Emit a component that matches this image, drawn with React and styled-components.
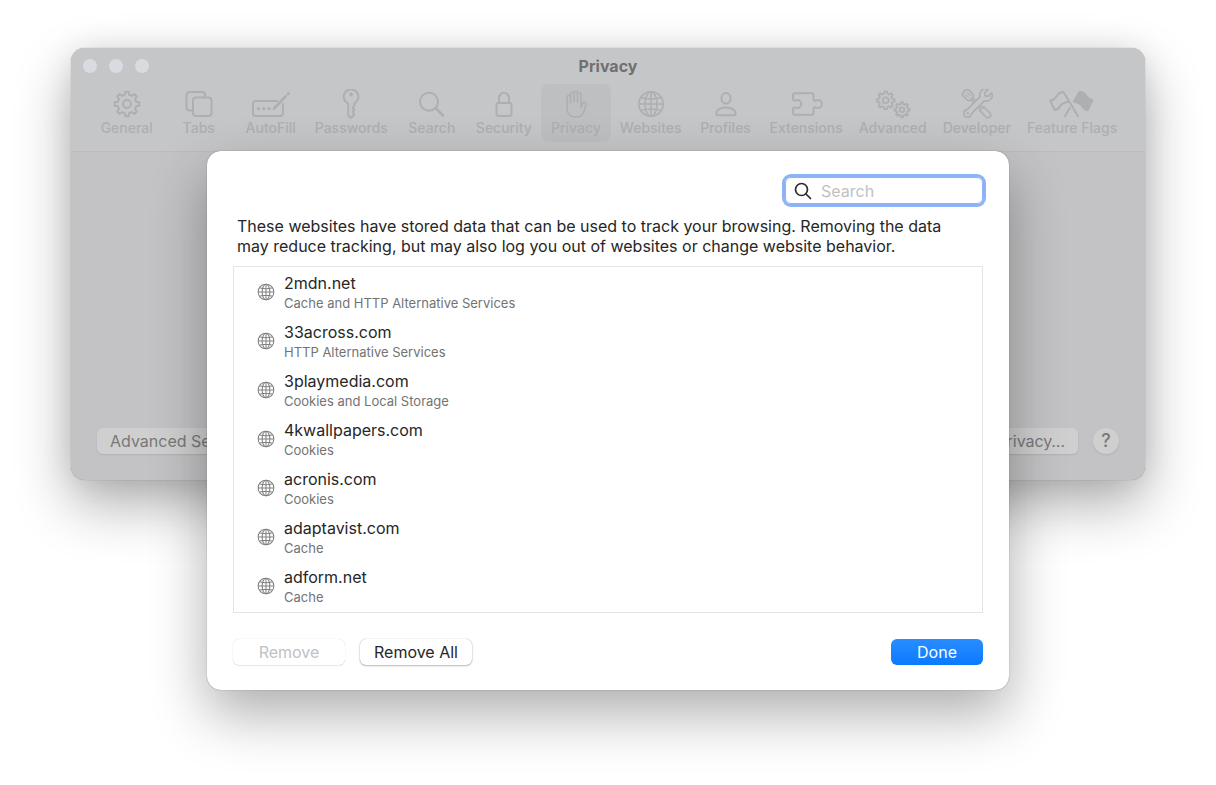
import React from 'react';
import styled, { createGlobalStyle } from 'styled-components';

const tabs = [
    { name: 'General', icon: GearIcon },
    { name: 'Tabs', icon: TabsIcon },
    { name: 'AutoFill', icon: AutoFillIcon },
    { name: 'Passwords', icon: KeyIcon },
    { name: 'Search', icon: SearchIcon },
    { name: 'Security', icon: LockIcon },
    { name: 'Privacy', icon: HandIcon },
    { name: 'Websites', icon: GlobeIcon },
    { name: 'Profiles', icon: ProfileIcon },
    { name: 'Extensions', icon: PuzzleIcon },
    { name: 'Advanced', icon: GearsIcon },
    { name: 'Developer', icon: ToolsIcon },
    { name: 'Feature Flags', icon: FlagsIcon },
];

const websites = [
    { domain: '2mdn.net', data: 'Cache and HTTP Alternative Services' },
    { domain: '33across.com', data: 'HTTP Alternative Services' },
    { domain: '3playmedia.com', data: 'Cookies and Local Storage' },
    { domain: '4kwallpapers.com', data: 'Cookies' },
    { domain: 'acronis.com', data: 'Cookies' },
    { domain: 'adaptavist.com', data: 'Cache' },
    { domain: 'adform.net', data: 'Cache' },
];

export default function App() {
    const [search, setSearch] = React.useState('');
    const [activeTab, setActiveTab] = React.useState('Privacy');

    const shown = websites.filter((site) => site.domain.includes(search.toLowerCase()));

    return (
        <>
        <GlobalStyle />
        <Page>
            <Window>
                <Header>
                    <TitleBar>
                        <Lights>
                            <Light type="button" aria-label="Close" />
                            <Light type="button" aria-label="Minimize" />
                            <Light type="button" aria-label="Zoom" />
                        </Lights>
                        <Title>{activeTab}</Title>
                    </TitleBar>
                    <Toolbar>
                        {tabs.map((tab) => (
                            <ToolbarItem
                                type="button"
                                key={tab.name}
                                $active={tab.name === activeTab}
                                onClick={() => setActiveTab(tab.name)}
                            >
                                <ToolbarIcon viewBox="-24 -15 48 30" aria-hidden="true">
                                    <tab.icon />
                                </ToolbarIcon>
                                {tab.name}
                            </ToolbarItem>
                        ))}
                    </Toolbar>
                </Header>
                <Body>
                    <BottomBar>
                        <DimButton type="button">Advanced Settings…</DimButton>
                        <BottomGroup>
                            <DimButton type="button">About Safari &amp; Privacy…</DimButton>
                            <HelpButton type="button" aria-label="Help">?</HelpButton>
                        </BottomGroup>
                    </BottomBar>
                    <Sheet role="dialog" aria-label="Website data">
                        <SearchField>
                            <SearchGlyph viewBox="0 0 18 18" aria-hidden="true">
                                <circle cx="7.5" cy="7.5" r="6" />
                                <path d="M12 12l4.500 4.500" />
                            </SearchGlyph>
                            <SearchInput
                                type="text"
                                placeholder="Search"
                                aria-label="Search"
                                value={search}
                                onChange={(e) => setSearch(e.target.value)}
                            />
                        </SearchField>
                        <Message>
                            These websites have stored data that can be used to track your browsing. Removing the data
                            may reduce tracking, but may also log you out of websites or change website behavior.
                        </Message>
                        <SiteList>
                            {shown.map((site) => (
                                <SiteRow key={site.domain}>
                                    <SiteIcon viewBox="-14 -14 28 28" aria-hidden="true">
                                        <GlobeIcon />
                                    </SiteIcon>
                                    <div>
                                        <Domain>{site.domain}</Domain>
                                        <DataKind>{site.data}</DataKind>
                                    </div>
                                </SiteRow>
                            ))}
                        </SiteList>
                        <Actions>
                            <SheetButton type="button" disabled>Remove</SheetButton>
                            <SheetButton type="button">Remove All</SheetButton>
                            <DoneButton type="button">Done</DoneButton>
                        </Actions>
                    </Sheet>
                </Body>
            </Window>
        </Page>
        </>
    )
}

// icons are drawn round 0,0

function gearPath(cx, cy, outer, inner, teeth) {
    const step = (Math.PI * 2) / teeth;
    const points = [];
    for (let i = 0; i < teeth; i++) {
        const a = i * step - Math.PI / 2;
        [[-0.31, inner], [-0.17, outer], [0.17, outer], [0.31, inner]].forEach(([offset, r]) => {
            const angle = a + offset * step;
            points.push(`${(cx + r * Math.cos(angle)).toFixed(2)} ${(cy + r * Math.sin(angle)).toFixed(2)}`);
        });
    }
    return `M${points.join('L')}Z`;
}

function GearIcon() {
    return (
        <>
            <path d={gearPath(0, 0, 12.4, 9.4, 8)} />
            <circle r="4" />
        </>
    )
}

function TabsIcon() {
    return (
        <>
            <path d="M-7 6.5H-9.5a3 3 0 0 1-3-3V-9a3 3 0 0 1 3-3H3a3 3 0 0 1 3 3v2" />
            <rect x="-6" y="-6.5" width="18.5" height="18.5" rx="3" />
        </>
    )
}

function AutoFillIcon() {
    return (
        <>
            <path d="M6-3H-15.5a2.500 2.500 0 0 0-2.500 2.500v10a2.500 2.500 0 0 0 2.500 2.500H9.500a2.500 2.500 0 0 0 2.500-2.500V0" />
            <path d="M3 4.500L14.500-7.500" strokeWidth="2.600" />
            <path d="M17-10L17.500-10.500" strokeWidth="2.600" />
            <g fill="currentColor" stroke="none">
                <circle cx="-12.500" cy="4.700" r="1.600" />
                <circle cx="-7.300" cy="4.700" r="1.600" />
                <circle cx="-2" cy="4.700" r="1.600" />
            </g>
        </>
    )
}

function KeyIcon() {
    return (
        <>
            <path d="M-2.800-.6A7.300 7.300 0 1 1 3.300-.8L3.300 2 1.500 4 3.300 6 1.500 8 3.300 10.500 0 14-2.800 11.500Z" />
            <circle cy="-9.500" r="1.900" fill="currentColor" stroke="none" />
        </>
    )
}

function SearchIcon() {
    return (
        <>
            <circle cx="-3" cy="-2.300" r="9" />
            <path d="M4 4.500L11 11.500" strokeWidth="2.500" />
        </>
    )
}

function LockIcon() {
    return (
        <>
            <rect x="-7.500" y="-1" width="15" height="13" rx="2" />
            <path d="M-5-1V-6a5 5.300 0 0 1 10 0V-1" />
        </>
    )
}

function HandIcon() {
    return (
        <path
            strokeWidth="1.600"
            d="M-9 4V-7a1.750 1.750 0 0 1 3.500 0V-1V-10a1.750 1.750 0 0 1 3.500 0V-2V-11a1.750 1.750 0 0 1 3.500 0V-2V-9.500a1.750 1.750 0 0 1 3.500 0V3.500L7-1a1.600 1.600 0 0 1 3 1C9 4 8.500 13 0 13C-6 13-9 9-9 4Z"
        />
    )
}

function GlobeIcon() {
    return (
        <g strokeWidth="1.600">
            <circle r="12.200" />
            <ellipse rx="6" ry="12.200" />
            <path d="M0-12.200V12.200M-12.200 0H12.200M-10.200-6.500Q0-3.500 10.200-6.500M-10.200 6.500Q0 3.500 10.200 6.500" />
        </g>
    )
}

function ProfileIcon() {
    return (
        <>
            <ellipse cy="-5.700" rx="4.600" ry="5.200" />
            <path d="M-9.600 10C-9.600 6-5.500 3.400 0 3.400S9.600 6 9.600 10q0 1.300-1.300 1.300H-8.300q-1.300 0-1.300-1.300Z" />
        </>
    )
}

function PuzzleIcon() {
    return (
        <path d="M-13-5V-8.800a2 2 0 0 1 2-2H5.500a2 2 0 0 1 2 2V-4.500C7.700-2.700 9.300-3 10.500-3.600A3.900 3.900 0 1 1 10.500 3.600C9.300 3 7.700 2.700 7.500 4.500V8.800a2 2 0 0 1-2 2H-11a2 2 0 0 1-2-2V5C-12.800 3.400-11.200 3.200-10 3.600A3.900 3.900 0 1 0-10-3.600C-11.200-3.200-12.800-3.400-13-5Z" />
    )
}

function GearsIcon() {
    return (
        <g strokeWidth="1.800">
            <path d={gearPath(-7.3, -3.7, 9, 6.800, 8)} />
            <circle cx="-7.300" cy="-3.700" r="3" />
            <path d={gearPath(9, 5.700, 7.600, 5.700, 8)} />
            <circle cx="9" cy="5.700" r="2.300" />
        </g>
    )
}

function ToolsIcon() {
    return (
        <g strokeWidth="1.700">
            <g transform="rotate(-45)">
                <path d="M-1.300-7.500V7H-2.800V15.500a2.800 2.800 0 0 0 5.600 0V7H1.300V-7.500" />
                <rect x="-4" y="-18" width="8" height="10.500" rx="2.500" />
                <path d="M-1.300-15V-10.500M1.300-15V-10.500" strokeWidth="1" />
            </g>
            <g transform="rotate(45)">
                <path
                    fill="#c5c6c8"
                    d="M-2.500-18.300V-13.300L0-11.500 2.500-13.300V-18.300C7-16.500 8-10.500 3-7.300V11A3.800 3.800 0 1 1-3 11V-7.300C-8-10.500-7-16.500-2.500-18.300Z"
                />
                <circle cy="13" r="1.200" fill="currentColor" stroke="none" />
            </g>
        </g>
    )
}

function FlagsIcon() {
    return (
        <>
            <path d="M-8.500-12L6 12.300M-8.500-12C-12-12-14-10-15.500-7.500S-19-4-21.800-3.300L-17.300 6C-14 5.500-12.500 3.500-11.500 1.500S-7-1.500-3.500-2.500" />
            <path fill="currentColor" d="M7.500-12C10.500-12 12.500-11 14-8.500S17.500-4.500 20.500-4L15.800 6C13 6 11.500 4.500 10 2S6-1.500 2-2.500Z" />
            <path d="M-2.300 4L-7 12.300" />
        </>
    )
}

const font = `'Inter', 'Roboto', 'Liberation Sans', sans-serif`;

const GlobalStyle = createGlobalStyle`
    *{
        box-sizing: border-box;
    }
    body{
        margin: 0;
        background: #ffffff;
        font-family: ${font};
    }
    button, input{
        font-family: inherit;
        margin: 0;
    }
`

const Page = styled.main`
    min-height: 100vh;
    padding: 48px 71px;
`

const Window = styled.section`
    border-radius: 14px;
    background: #c3c3c5;
    box-shadow: 0 0 1px rgba(0, 0, 0, 0.4), 0 0 30px rgba(0, 0, 0, 0.08), 0 24px 56px rgba(0, 0, 0, 0.32);
`

const Header = styled.header`
    padding-bottom: 9px;
    border-bottom: 1px solid #bbbcbe;
    border-radius: 14px 14px 0 0;
    background: #c5c6c8;
`

const TitleBar = styled.div`
    display: grid;
    grid-template-columns: 1fr auto 1fr;
    align-items: center;
    height: 36px;
    padding: 0 12px;
`

const Lights = styled.div`
    display: flex;
    gap: 12px;
`

const Light = styled.button`
    width: 14px;
    height: 14px;
    padding: 0;
    border: none;
    border-radius: 50%;
    background: #dadbe1;
`

const Title = styled.h1`
    margin: 0;
    font-size: 16px;
    line-height: 20px;
    font-weight: 700;
    color: #6f7072;
`

const Toolbar = styled.nav`
    display: flex;
    justify-content: center;
    gap: 2px;
`

const ToolbarItem = styled.button`
    display: flex;
    flex-direction: column;
    align-items: center;
    min-width: 70px;
    padding: 5px 7px;
    border: none;
    border-radius: 8px;
    background: ${(props) => (props.$active ? '#bebfc1' : 'transparent')};
    color: #aeafb1;
    font-size: 14px;
    line-height: 18px;
    font-weight: 500;
    white-space: nowrap;
`

const ToolbarIcon = styled.svg`
    width: 48px;
    height: 30px;
    fill: none;
    stroke: currentColor;
    stroke-width: 2;
    stroke-linecap: round;
    stroke-linejoin: round;
`

const Body = styled.div`
    position: relative;
    padding: 276px 26px 26px;
`

const BottomBar = styled.div`
    display: flex;
    justify-content: space-between;
`

const BottomGroup = styled.div`
    display: flex;
    gap: 15px;
`

const DimButton = styled.button`
    height: 26px;
    padding: 0 13px;
    border: none;
    border-radius: 6px;
    background: #cfcfd0;
    box-shadow: 0 1px 2px rgba(0, 0, 0, 0.1);
    color: #77787a;
    font-size: 16px;
    line-height: 20px;
`

const HelpButton = styled(DimButton)`
    width: 26px;
    padding: 0;
    border-radius: 50%;
    font-size: 18px;
    font-weight: 500;
`

const Sheet = styled.div`
    position: absolute;
    top: -1px;
    left: 0;
    right: 0;
    display: flex;
    flex-direction: column;
    max-width: 802px;
    margin: 0 auto;
    padding: 26px 26px 25px;
    border-radius: 14px;
    background: #ffffff;
    box-shadow: 0 0 1px rgba(0, 0, 0, 0.6), 0 24px 56px rgba(0, 0, 0, 0.32);
`

const SearchField = styled.label`
    display: flex;
    align-items: center;
    align-self: flex-end;
    gap: 9px;
    width: 198px;
    height: 27px;
    padding: 0 8px;
    border: 1px solid #8db2f8;
    border-radius: 6px;
    box-shadow: 0 0 0 3px #8db2f8;
`

const SearchGlyph = styled.svg`
    flex: none;
    width: 18px;
    height: 18px;
    fill: none;
    stroke: #2b2b2b;
    stroke-width: 1.7;
    stroke-linecap: round;
`

const SearchInput = styled.input`
    flex: 1;
    min-width: 0;
    padding: 0;
    border: none;
    outline: none;
    background: transparent;
    color: #262626;
    font-size: 16px;
    line-height: 20px;
    &::placeholder{
        color: #c1c1c4;
    }
`

const Message = styled.p`
    margin: 12px 0 10px;
    padding: 0 24px 0 4px;
    color: #262626;
    font-size: 16px;
    line-height: 20px;
`

const SiteList = styled.ul`
    margin: 0;
    padding: 0;
    min-height: 347px;
    border: 1px solid #e4e4e4;
    list-style: none;
`

const SiteRow = styled.li`
    display: flex;
    align-items: center;
    gap: 9px;
    height: 49px;
    padding: 0 23px;
`

const SiteIcon = styled.svg`
    width: 18px;
    height: 18px;
    fill: none;
    stroke: #808080;
`

const Domain = styled.div`
    color: #262626;
    font-size: 16px;
    line-height: 22px;
`

const DataKind = styled.div`
    color: #737373;
    font-size: 13px;
    line-height: 18px;
`

const Actions = styled.div`
    display: flex;
    gap: 15px;
    margin-top: 26px;
`

const SheetButton = styled.button`
    height: 26px;
    min-width: 112px;
    padding: 0 13px;
    border: none;
    border-radius: 6px;
    background: #ffffff;
    box-shadow: 0 0 1px rgba(0, 0, 0, 0.35), 0 1px 2px rgba(0, 0, 0, 0.25);
    color: #262626;
    font-size: 16px;
    line-height: 20px;
    white-space: nowrap;
    &:disabled{
        color: #c1c1c4;
        box-shadow: 0 0 1px rgba(0, 0, 0, 0.2), 0 1px 1px rgba(0, 0, 0, 0.08);
    }
`

const DoneButton = styled(SheetButton)`
    min-width: 92px;
    margin-left: auto;
    background: linear-gradient(#2a8dff, #0a7aff);
    box-shadow: none;
    color: #ffffff;
`
